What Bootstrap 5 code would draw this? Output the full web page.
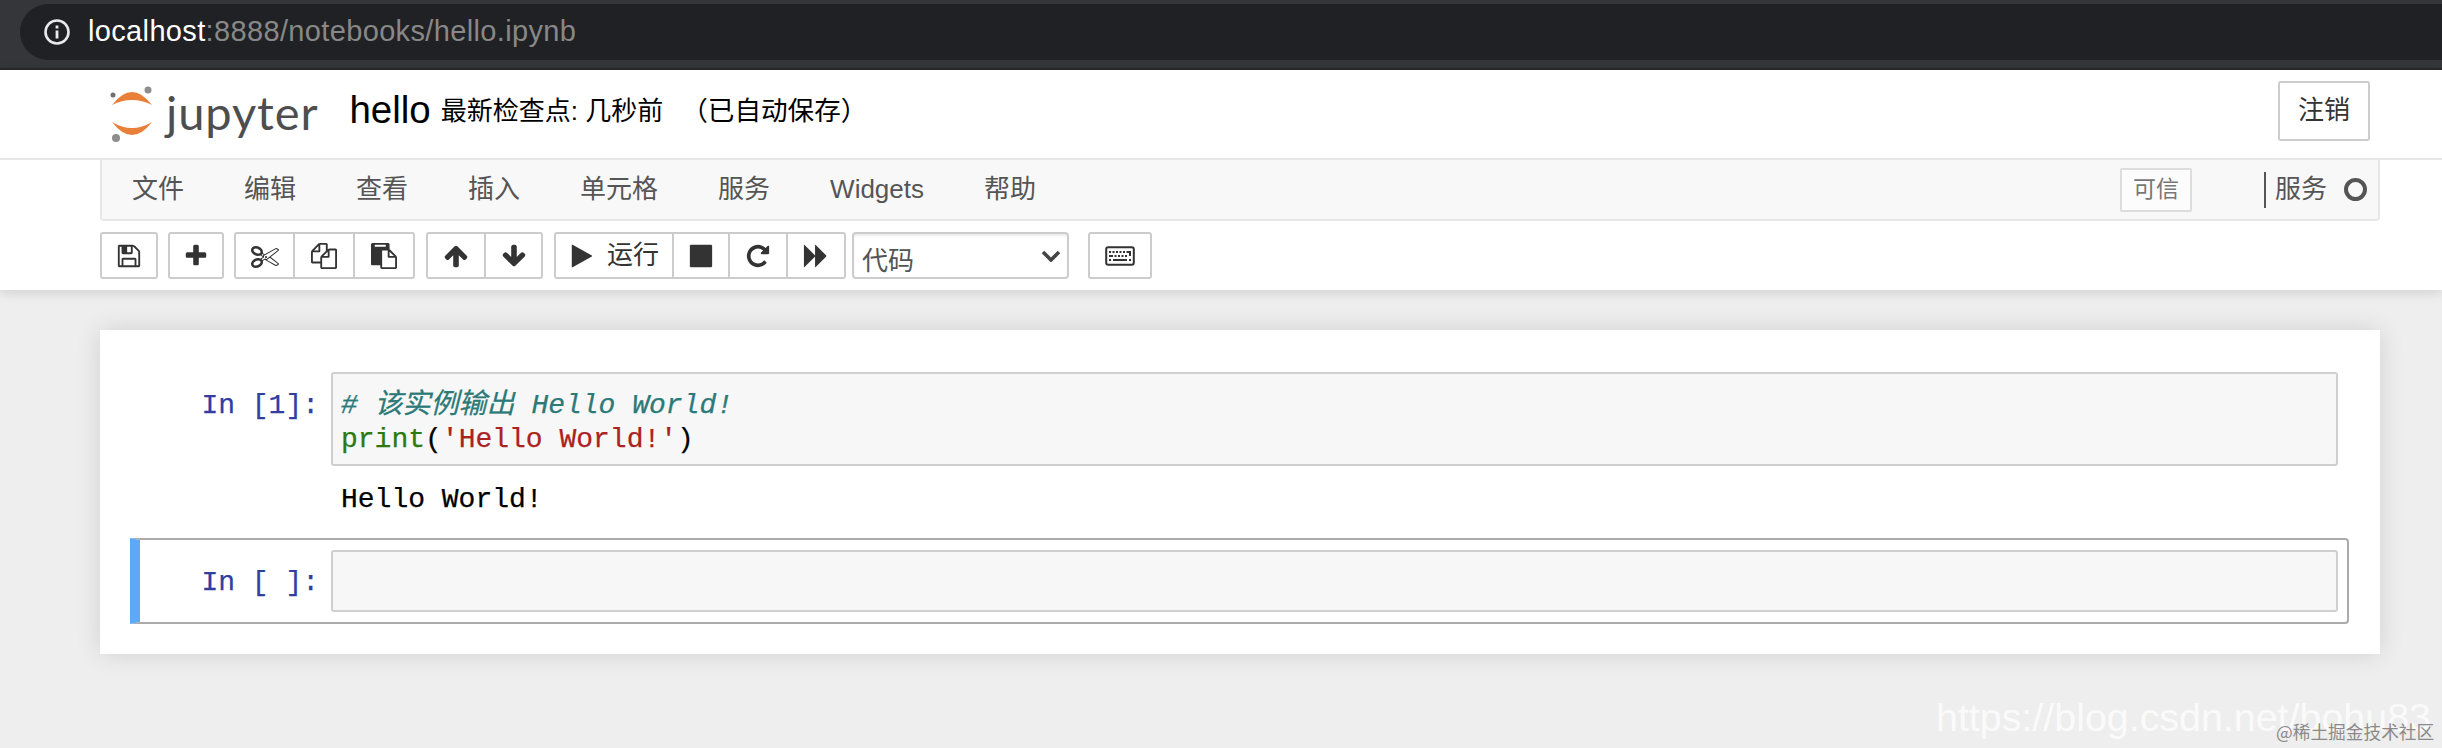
<!DOCTYPE html>
<html lang="zh">
<head>
<meta charset="utf-8">
<title>hello</title>
<link href="https://cdn.jsdelivr.net/npm/bootstrap@5.3.0/dist/css/bootstrap.min.css" rel="stylesheet">
<style>
html,body{height:748px;overflow:hidden}
body{background:#eee;font-family:"Liberation Sans","Noto Sans CJK SC",sans-serif;font-size:26px;color:#000;position:relative}
.chrome-bar{height:70px;background:#35363a;border-bottom:2px solid #292a2d;padding:4px 0 8px 20px}
.addr-pill{height:56px;background:#202124;border-radius:28px 0 0 28px;padding-left:24px;font-size:29px;letter-spacing:.35px;color:#fff;gap:18px}
.addr-pill span span{color:#888}
.site-head{background:#fff;height:220px;box-shadow:0 2px 12px rgba(0,0,0,.14);position:relative}
.title-row{height:90px;padding:0 72px 0 110px;border-bottom:2px solid #e7e7e7}
.word-mark{font-family:Lato,"Liberation Sans",sans-serif;font-size:47px;color:#4e4e4e;letter-spacing:.9px;margin:0 0 3px 12px;line-height:1}
.nb-name{font-size:38.5px;margin:0 0 8px 31px;color:#000}
.cp-info{font-size:26px;margin:0 0 4px 10px;color:#000}
.cp-auto{margin-left:18px;font-size:26.6px}
.logout-btn{width:92px;height:60px;border:2px solid #ccc;border-radius:3px;font-size:26px;color:#333;background:#fff;padding:0;margin-top:-7px}
.menu-strip{width:2280px;height:61px;margin-left:100px;background:#f8f8f8;border:2px solid #e7e7e7;border-top:0;border-radius:0 0 4px 4px;padding-right:11px}
.menu-strip .nav-link{padding:0 30px;color:#555;font-size:26px;line-height:59px}
.trust-tag{width:72px;height:44px;border:2px solid #ddd;background:#fcfcfc;color:#777;font-size:23px;border-radius:2px;margin-right:72px}
.kernel-sep{width:2px;height:36px;background:#555;margin-right:9px}
.kernel-name{color:#555;font-size:26px;margin-right:17px}
.kernel-dot{width:23px;height:23px;border:4px solid #555;border-radius:50%}
.tool-strip{margin:11px 0 0 100px;gap:10px;height:47px}
.tool-strip .btn-group{--bs-border-width:2px;flex:none}
.tool-btn{height:47px;padding:0;border:2px solid #ccc;border-radius:3px;background:#fff;color:#333;font-size:26px;display:flex;align-items:center;justify-content:center;flex:none}
.tool-btn svg{fill:#333;display:block}
.w-save{width:58px}.w-plus{width:56px}.w-c1{width:61px}.w-c2{width:62px}.w-up{width:60px}.w-down{width:59px}
.w-run{width:120px;gap:12px}.w-stop{width:58px}.w-re{width:60px}.w-ff{width:60px}.w-kb{width:64px}
.nudge-one{margin-left:1px}
.cell-type{width:217px;height:47px;margin-left:-4px;padding:11px 0 0 8px;border:2px solid #ccc;border-radius:4px;font-size:26px;color:#555;line-height:32px;box-shadow:inset 0 2px 2px rgba(0,0,0,.075);background-color:#fff;background-size:20px 12px;background-position:right 6px center;background-image:url("data:image/svg+xml,%3Csvg xmlns='http://www.w3.org/2000/svg' viewBox='0 0 20 12'%3E%3Cpath d='M2 2l8 8 8-8' fill='none' stroke='%23444' stroke-width='3.6'/%3E%3C/svg%3E")}
.kb-gap{margin-left:9px}
.nb-sheet{width:2280px;margin:40px 0 0 100px;height:324px;background:#fff;box-shadow:0 0 24px rgba(0,0,0,.12);padding:30px 31px 30px 30px}
.nb-cell{padding:12px 11px 0 0;height:178px;border-left:10px solid transparent;border-right:0}
.nb-cell.is-sel{height:86px;padding:10px 9px 0 0;border:2px solid #ababab;border-left:10px solid #5fa8f5;border-radius:0 4px 4px 0}
.mono-text{font-family:"Liberation Mono","Noto Sans CJK SC",monospace;font-size:28px;line-height:34px;-webkit-text-stroke:.25px currentColor}
.in-prompt{width:191px;flex:none;color:#303f9f;padding:17px 12px 0 0;text-align:right;white-space:pre}
.code-box{flex:1;height:94px;background:#f7f7f7;border:2px solid #cfcfcf;border-radius:3px;padding:15px 8px 0;white-space:pre}
.is-sel .code-box{height:62px}
.code-c{color:#2b7a78;font-style:italic}.code-b{color:#2a7a10}.code-s{color:#ab2222}
.out-line{padding:17px 0 0 201px;white-space:pre;height:50px}
.is-sel .in-prompt{padding-top:16px}
.mark-url{position:absolute;left:1936px;top:690px;font-size:39.4px;line-height:54px;color:rgba(255,255,255,.75);white-space:nowrap}
.mark-src{position:absolute;left:2276px;top:719px;font-family:"Noto Sans CJK SC",sans-serif;font-size:17.7px;line-height:24px;color:#8a8a8a;white-space:nowrap}
</style>
</head>
<body>
<div class="chrome-bar">
  <div class="addr-pill d-flex align-items-center">
    <svg width="26" height="26" viewBox="0 0 26 26"><circle cx="13" cy="13" r="11.5" fill="none" stroke="#e8eaed" stroke-width="2.6"/><rect x="11.6" y="11.5" width="2.8" height="8" fill="#e8eaed"/><rect x="11.6" y="6.5" width="2.8" height="3" fill="#e8eaed"/></svg>
    <span>localhost<span>:8888/notebooks/hello.ipynb</span></span>
  </div>
</div>
<header class="site-head">
  <div class="title-row d-flex align-items-center">
    <svg width="44" height="58" viewBox="0 0 44 58"><path d="M2 20Q22 -6 42 20Q22 10 2 20Z" fill="#e9803a"/><path d="M2 37Q22 63 42 37Q22 49 2 37Z" fill="#e9803a"/><circle cx="38" cy="5" r="3.5" fill="#8e8e8e"/><circle cx="3" cy="10" r="2.5" fill="#6f6f6f"/><circle cx="6" cy="53" r="4" fill="#8e8e8e"/></svg>
    <div class="word-mark">jupyter</div>
    <div class="nb-name">hello</div>
    <div class="cp-info">最新检查点: 几秒前<span class="cp-auto">（已自动保存）</span></div>
    <button class="btn logout-btn ms-auto" type="button">注销</button>
  </div>
  <div class="menu-strip d-flex align-items-center">
    <ul class="nav">
      <li class="nav-item"><a class="nav-link" href="#">文件</a></li>
      <li class="nav-item"><a class="nav-link" href="#">编辑</a></li>
      <li class="nav-item"><a class="nav-link" href="#">查看</a></li>
      <li class="nav-item"><a class="nav-link" href="#">插入</a></li>
      <li class="nav-item"><a class="nav-link" href="#">单元格</a></li>
      <li class="nav-item"><a class="nav-link" href="#">服务</a></li>
      <li class="nav-item"><a class="nav-link" href="#">Widgets</a></li>
      <li class="nav-item"><a class="nav-link" href="#">帮助</a></li>
    </ul>
    <div class="trust-tag d-flex align-items-center justify-content-center ms-auto">可信</div>
    <div class="kernel-sep"></div>
    <div class="kernel-name">服务</div>
    <div class="kernel-dot"></div>
  </div>
  <div class="tool-strip d-flex">
    <button class="btn tool-btn w-save" type="button" aria-label="保存"><svg width="26" height="26" viewBox="0 0 1792 1792"><path d="M512 1536h768v-384h-768v384zm896 0h128v-896q0-14-10-38.5t-20-34.5l-281-281q-10-10-34-20t-39-10v416q0 40-28 68t-68 28h-576q-40 0-68-28t-28-68v-416h-128v1280h128v-416q0-40 28-68t68-28h832q40 0 68 28t28 68v416zm-384-928v-320q0-13-9.5-22.5t-22.5-9.5h-192q-13 0-22.5 9.5t-9.5 22.5v320q0 13 9.5 22.5t22.5 9.5h192q13 0 22.5-9.5t9.5-22.5zm640 32v928q0 40-28 68t-68 28h-1344q-40 0-68-28t-28-68v-1344q0-40 28-68t68-28h928q40 0 88 20t76 48l280 280q28 28 48 76t20 88z"/></svg></button>
    <button class="btn tool-btn w-plus" type="button" aria-label="添加"><svg width="26" height="26" viewBox="0 0 1792 1792"><path d="M1600 736v192q0 40-28 68t-68 28h-416v416q0 40-28 68t-68 28h-192q-40 0-68-28t-28-68v-416h-416q-40 0-68-28t-28-68v-192q0-40 28-68t68-28h416v-416q0-40 28-68t68-28h192q40 0 68 28t28 68v416h416q40 0 68 28t28 68z"/></svg></button>
    <div class="btn-group">
      <button class="btn tool-btn w-c1" type="button" aria-label="剪切"><svg width="28" height="28" viewBox="0 0 1792 1792"><path d="M960 896q26 0 45 19t19 45-19 45-45 19-45-19-19-45 19-45 45-19zm300 64l507 398q28 20 25 56-5 35-35 51l-128 64q-13 7-29 7-17 0-31-8l-690-387-110 66q-8 4-12 5 14 49 10 97-7 77-56 147.5t-132 123.5q-132 84-277 84-136 0-222-78-90-84-79-207 7-76 56-147t131-124q132-84 278-84 83 0 151 31 9-13 22-22l122-73-122-73q-13-9-22-22-68 31-151 31-146 0-278-84-82-53-131-124t-56-147q-5-59 15.5-113t63.5-93q85-79 222-79 145 0 277 84 83 52 132 123t56 148q4 48-10 97 4 1 12 5l110 66 690-387q14-8 31-8 16 0 29 7l128 64q30 16 35 51 3 36-25 56zm-681-260q46-42 21-108t-106-117q-92-59-192-59-74 0-113 36-46 42-21 108t106 117q92 59 192 59 74 0 113-36zm-85 745q81-51 106-117t-21-108q-39-36-113-36-100 0-192 59-81 51-106 117t21 108q39 36 113 36 100 0 192-59zm178-613l96 58v-11q0-36 33-56l14-8-79-47-26 26q-3 3-10 11t-12 12q-2 2-4 3.5t-3 2.5zm224 224l96 32 736-576-128-64-768 431v113l-160 96 9 8q2 2 7 6 4 4 11 12t11 12l26 26zm704 416l128-64-520-408-177 138q-2 3-13 7z"/></svg></button>
      <button class="btn tool-btn w-c2" type="button" aria-label="复制"><svg width="26" height="26" viewBox="0 0 1792 1792"><path d="M1696 384q40 0 68 28t28 68v1216q0 40-28 68t-68 28h-960q-40 0-68-28t-28-68v-288h-544q-40 0-68-28t-28-68v-672q0-40 20-88t48-76l408-408q28-28 76-48t88-20h416q40 0 68 28t28 68v328q68-40 128-40h416zm-544 213l-299 299h299v-299zm-640-384l-299 299h299v-299zm196 647l316-316v-416h-384v416q0 40-28 68t-68 28h-416v640h512v-256q0-40 20-88t48-76zm956 804v-1152h-384v416q0 40-28 68t-68 28h-416v640h896z"/></svg></button>
      <button class="btn tool-btn w-c2" type="button" aria-label="粘贴"><svg width="26" height="26" viewBox="0 0 1792 1792"><path d="M768 1664h896v-640h-416q-40 0-68-28t-28-68v-416h-384v1152zm256-1440v-64q0-13-9.5-22.5t-22.5-9.5h-704q-13 0-22.5 9.5t-9.5 22.5v64q0 13 9.5 22.5t22.5 9.5h704q13 0 22.5-9.5t9.5-22.5zm256 672h299l-299-299v299zm512 128v672q0 40-28 68t-68 28h-960q-40 0-68-28t-28-68v-160h-544q-40 0-68-28t-28-68v-1344q0-40 28-68t68-28h1088q40 0 68 28t28 68v328q21 13 36 28l408 408q28 28 48 76t20 88z"/></svg></button>
    </div>
    <div class="btn-group nudge-one">
      <button class="btn tool-btn w-up" type="button" aria-label="上移"><svg width="26" height="26" viewBox="0 0 1792 1792"><path d="M1675 971q0 51-37 90l-75 75q-38 38-91 38-54 0-90-38l-294-293v704q0 52-37.5 84.5t-90.5 32.5h-128q-53 0-90.5-32.5t-37.5-84.5v-704l-294 293q-36 38-90 38t-90-38l-75-75q-38-38-38-90 0-53 38-91l651-651q35-37 90-37 54 0 91 37l651 651q37 39 37 91z"/></svg></button>
      <button class="btn tool-btn w-down" type="button" aria-label="下移"><svg width="26" height="26" viewBox="0 0 1792 1792"><path d="M1675 832q0 53-37 90l-651 652q-39 37-91 37-53 0-90-37l-651-652q-38-36-38-90 0-53 38-91l74-75q39-37 91-37 53 0 90 37l294 294v-704q0-52 38-90t90-38h128q52 0 90 38t38 90v704l294-294q37-37 90-37 52 0 91 37l75 75q37 39 37 91z"/></svg></button>
    </div>
    <div class="btn-group nudge-one">
      <button class="btn tool-btn w-run" type="button"><svg width="26" height="26" viewBox="0 0 1792 1792"><path d="M1576 927l-1328 738q-23 13-39.5 3t-16.5-36v-1472q0-26 16.5-36t39.5 3l1328 738q23 13 23 31t-23 31z"/></svg><span>运行</span></button>
      <button class="btn tool-btn w-stop" type="button" aria-label="停止"><svg width="26" height="26" viewBox="0 0 1792 1792"><path d="M1664 192v1408q0 26-19 45t-45 19h-1408q-26 0-45-19t-19-45v-1408q0-26 19-45t45-19h1408q26 0 45 19t19 45z"/></svg></button>
      <button class="btn tool-btn w-re" type="button" aria-label="重启"><svg width="26" height="26" viewBox="0 0 1792 1792"><path d="M1664 256v448q0 26-19 45t-45 19h-448q-42 0-59-40-17-39 14-69l138-138q-148-137-349-137-104 0-198.5 40.5t-163.5 109.5-109.5 163.5-40.5 198.5 40.5 198.5 109.5 163.5 163.5 109.5 198.5 40.5q119 0 225-52t179-147q7-10 23-12 15 0 25 9l137 138q9 8 9.5 20.5t-7.5 22.5q-109 132-264 204.5t-327 72.5q-156 0-298-61t-245-164-164-245-61-298 61-298 164-245 245-164 298-61q147 0 284.5 55.5t244.5 156.5l130-129q29-31 70-14 39 17 39 59z"/></svg></button>
      <button class="btn tool-btn w-ff" type="button" aria-label="全部运行"><svg width="26" height="26" viewBox="0 0 1792 1792"><path d="M109 1651q-19 19-32 13t-13-32v-1472q0-26 13-32t32 13l710 710q9 9 13 19v-710q0-26 13-32t32 13l710 710q19 19 19 45t-19 45l-710 710q-19 19-32 13t-13-32v-710q-4 10-13 19z"/></svg></button>
    </div>
    <select class="form-select cell-type" aria-label="单元格类型"><option>代码</option></select>
    <button class="btn tool-btn w-kb kb-gap" type="button" aria-label="快捷键"><svg width="30" height="20" viewBox="0 0 30 20"><rect x="1.2" y="1.2" width="27.6" height="17.6" rx="2" fill="none" stroke="#333" stroke-width="2"/><path d="M4 5h2v2H4zM7.500 5h2v2h-2zM11 5h2v2h-2zM14.500 5h2v2h-2zM18 5h2v2h-2zM21.500 5h4.500v5h-2V7h-2.500zM4 9h4v2H4zM9.500 9h2v2h-2zM13 9h2v2h-2zM16.500 9h2v2h-2zM20 9h2v2h-2zM4 13h2v2H4zM8 13h14v2H8zM24 13h2v2h-2z"/></svg></button>
  </div>
</header>
<main class="nb-sheet">
  <div class="nb-cell">
    <div class="d-flex">
      <div class="in-prompt mono-text">In [1]:</div>
      <div class="code-box mono-text"><span class="code-c"># 该实例输出 Hello World!</span>
<span class="code-b">print</span>(<span class="code-s">'Hello World!'</span>)</div>
    </div>
    <div class="out-line mono-text">Hello World!</div>
  </div>
  <div class="nb-cell is-sel">
    <div class="d-flex">
      <div class="in-prompt mono-text">In [ ]:</div>
      <div class="code-box mono-text"></div>
    </div>
  </div>
</main>
<div class="mark-url">https://blog.csdn.net/bohu83</div>
<div class="mark-src">@稀土掘金技术社区</div>
</body>
</html>
